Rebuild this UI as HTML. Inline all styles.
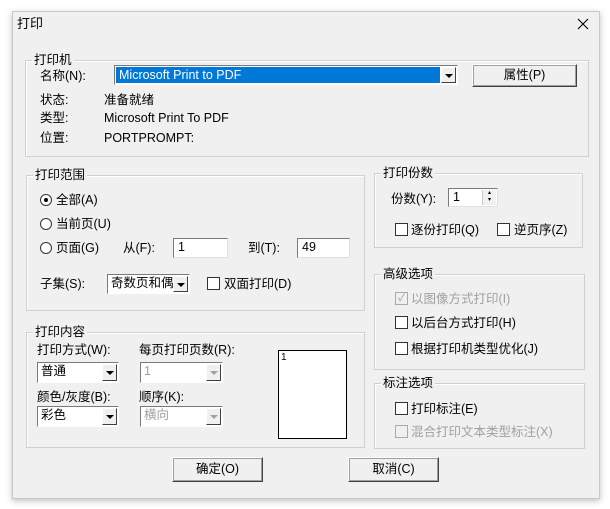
<!DOCTYPE html>
<html><head><meta charset="utf-8"><style>
body{margin:0;width:610px;height:509px;background:#fff;position:relative;overflow:hidden;font-family:"Liberation Sans","Noto Sans CJK SC",sans-serif;font-size:12.5px;color:#000}
.win{position:absolute;left:12px;top:11px;width:586px;height:486px;background:#f0f0f0;border:1px solid #c8c8c8;box-shadow:0 2px 6px rgba(0,0,0,.25)}
.a{position:absolute;white-space:nowrap;line-height:14px}
.g{position:absolute;border:1px solid #d0d0d0;box-shadow:inset 1px 1px 0 #fff}
.gt{position:absolute;top:-8px;left:6px;background:#f0f0f0;padding:0 2px;line-height:14px}
.ed{position:absolute;background:#fff;border:1px solid #7a7a7a;border-right-color:#e0e0e0;border-bottom-color:#e0e0e0;box-sizing:border-box;padding-left:4px;line-height:16px}
.cb{position:absolute;background:#fff;border:1px solid #7a7a7a;border-right-color:#fff;border-bottom-color:#fff;box-sizing:border-box;padding-left:3px;line-height:17px}
.dd{position:absolute;right:1px;top:1px;bottom:1px;width:15px;background:#f0f0f0;border:1px solid #fff;border-right-color:#404040;border-bottom-color:#404040;box-sizing:border-box}
.dd:after{content:"";position:absolute;left:3px;top:6px;border:4px solid transparent;border-top:4px solid #000;border-bottom:0}
.dis{color:#a0a0a0}.dis .dd:after{border-top-color:#a0a0a0}
.btn{position:absolute;background:#f0f0f0;border:1px solid #fff;border-right-color:#404040;border-bottom-color:#404040;box-shadow:1px 1px 0 #a0a0a0 inset, -1px -1px 0 #a0a0a0 inset;box-sizing:border-box;text-align:center}
.ck{position:absolute;width:11px;height:11px;border:1px solid #333;background:#fff}
.rd{position:absolute;width:10px;height:10px;border:1px solid #333;border-radius:50%;background:#fff}
</style></head><body>
<div class="win"></div>
<div class="a" style="left:17px;top:17px;font-size:13px">打印</div>
<svg style="position:absolute;left:577px;top:18px" width="12" height="12"><path d="M1 1L11 11M11 1L1 11" stroke="#000" stroke-width="1.1"/></svg>

<div class="g" style="left:25px;top:60px;width:562px;height:95px"><span class="gt">打印机</span></div>
<div class="a" style="left:40px;top:69px">名称(N):</div>
<div class="cb" style="left:114px;top:65px;width:344px;height:20px;padding:1px"><div style="background:#0078d7;color:#fff;height:16px;line-height:16px;padding-left:3px;margin-right:16px">Microsoft Print to PDF</div><div class="dd"></div></div>
<div class="btn" style="left:472px;top:64px;width:105px;height:23px;line-height:21px">属性(P)</div>
<div class="a" style="left:40px;top:93px">状态:</div><div class="a" style="left:104px;top:93px">准备就绪</div>
<div class="a" style="left:40px;top:111px">类型:</div><div class="a" style="left:104px;top:111px">Microsoft Print To PDF</div>
<div class="a" style="left:40px;top:131px">位置:</div><div class="a" style="left:104px;top:131px">PORTPROMPT:</div>

<div class="g" style="left:26px;top:175px;width:337px;height:134px"><span class="gt">打印范围</span></div>
<div class="rd" style="left:40px;top:194px"></div><div style="position:absolute;left:44px;top:198px;width:4px;height:4px;border-radius:50%;background:#000"></div>
<div class="a" style="left:56px;top:193px">全部(A)</div>
<div class="rd" style="left:40px;top:218px"></div><div class="a" style="left:56px;top:217px">当前页(U)</div>
<div class="rd" style="left:40px;top:242px"></div><div class="a" style="left:56px;top:241px">页面(G)</div>
<div class="a" style="left:123px;top:241px">从(F):</div>
<div class="ed" style="left:173px;top:238px;width:55px;height:20px">1</div>
<div class="a" style="left:248px;top:241px">到(T):</div>
<div class="ed" style="left:297px;top:238px;width:53px;height:20px">49</div>
<div class="a" style="left:40px;top:277px">子集(S):</div>
<div class="cb" style="left:107px;top:274px;width:83px;height:20px">奇数页和偶<div class="dd"></div></div>
<div class="ck" style="left:207px;top:277px"></div><div class="a" style="left:224px;top:277px">双面打印(D)</div>

<div class="g" style="left:26px;top:332px;width:337px;height:114px"><span class="gt">打印内容</span></div>
<div class="a" style="left:37px;top:343px">打印方式(W):</div>
<div class="a" style="left:139px;top:343px">每页打印页数(R):</div>
<div class="cb" style="left:37px;top:362px;width:82px;height:21px">普通<div class="dd"></div></div>
<div class="cb dis" style="left:140px;top:362px;width:83px;height:21px">1<div class="dd"></div></div>
<div class="a" style="left:37px;top:390px">颜色/灰度(B):</div>
<div class="a" style="left:139px;top:390px">顺序(K):</div>
<div class="cb" style="left:37px;top:406px;width:82px;height:21px">彩色<div class="dd"></div></div>
<div class="cb dis" style="left:140px;top:406px;width:83px;height:21px">横向<div class="dd"></div></div>
<div style="position:absolute;left:278px;top:350px;width:69px;height:89px;background:#fff;border:1px solid #000;font-size:10px;line-height:14px;padding-left:2px;box-sizing:border-box">1</div>

<div class="g" style="left:374px;top:173px;width:207px;height:73px"><span class="gt">打印份数</span></div>
<div class="a" style="left:391px;top:192px">份数(Y):</div>
<div class="ed" style="left:448px;top:188px;width:50px;height:19px">1<div style="position:absolute;right:1px;top:1px;width:13px;height:15px;background:#f0f0f0;border-left:1px solid #ccc;font-size:6px;line-height:7px;text-align:center">▴<br>▾</div></div>
<div class="ck" style="left:395px;top:223px"></div><div class="a" style="left:411px;top:223px">逐份打印(Q)</div>
<div class="ck" style="left:497px;top:223px"></div><div class="a" style="left:514px;top:223px">逆页序(Z)</div>

<div class="g" style="left:374px;top:274px;width:209px;height:94px"><span class="gt">高级选项</span></div>
<div class="ck" style="left:395px;top:292px;border-color:#aaa;background:#f0f0f0;color:#999;font-size:10px;line-height:11px;text-align:center">✓</div><div class="a dis" style="left:411px;top:292px">以图像方式打印(I)</div>
<div class="ck" style="left:395px;top:316px"></div><div class="a" style="left:411px;top:316px">以后台方式打印(H)</div>
<div class="ck" style="left:395px;top:342px"></div><div class="a" style="left:411px;top:342px">根据打印机类型优化(J)</div>

<div class="g" style="left:374px;top:383px;width:209px;height:64px"><span class="gt">标注选项</span></div>
<div class="ck" style="left:395px;top:402px"></div><div class="a" style="left:411px;top:402px">打印标注(E)</div>
<div class="ck" style="left:395px;top:425px;border-color:#aaa;background:#f0f0f0"></div><div class="a dis" style="left:411px;top:425px">混合打印文本类型标注(X)</div>

<div class="btn" style="left:172px;top:457px;width:91px;height:25px;line-height:23px">确定(O)</div>
<div class="btn" style="left:348px;top:457px;width:91px;height:25px;line-height:23px">取消(C)</div>
</body></html>
